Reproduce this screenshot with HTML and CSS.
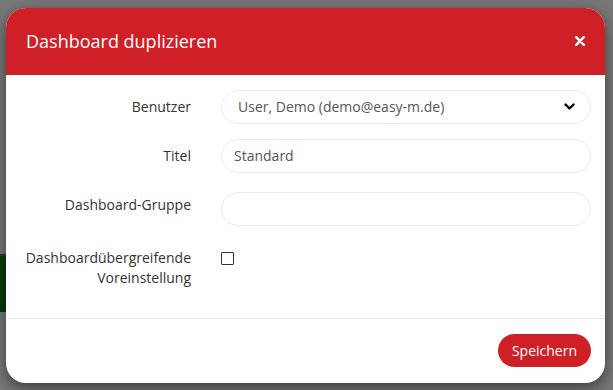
FILE: index.html
```html
<!DOCTYPE html>
<html lang="de">
<head>
<meta charset="utf-8">
<title>Dashboard duplizieren</title>
<link rel="stylesheet" href="styles.css">
</head>
<body>
<div class="backdrop-strip"></div>
<div class="modal">
  <div class="modal-header">
    <h4 class="modal-title">Dashboard duplizieren</h4>
    <span class="close" aria-label="Schließen">
      <svg width="10" height="10" viewBox="0 0 10 10"><path d="M1.2 1.2 L8.8 8.8 M8.8 1.2 L1.2 8.8" stroke="#fff" stroke-width="2.4" stroke-linecap="round"/></svg>
    </span>
  </div>
  <div class="modal-body">
    <div class="form-row">
      <label class="form-label">Benutzer</label>
      <div class="field select">
        <span class="select-text">User, Demo (demo@easy-m.de)</span>
        <svg class="chevron" width="11" height="8" viewBox="0 0 11 8"><path d="M1.5 1.5 L5.5 5.5 L9.5 1.5" fill="none" stroke="#000" stroke-width="2.4" stroke-linecap="round" stroke-linejoin="round"/></svg>
      </div>
    </div>
    <div class="form-row">
      <label class="form-label">Titel</label>
      <div class="field input">Standard</div>
    </div>
    <div class="form-row">
      <label class="form-label">Dashboard-Gruppe</label>
      <div class="field input offset"></div>
    </div>
    <div class="form-row">
      <label class="form-label">Dashboardübergreifende<br>Voreinstellung</label>
      <div class="check-wrap"><span class="checkbox"></span></div>
    </div>
  </div>
  <div class="modal-footer">
    <button class="btn-primary">Speichern</button>
  </div>
</div>
</body>
</html>
```
FILE: styles.css
```css
html, body {
  margin: 0;
  padding: 0;
}
body {
  width: 613px;
  height: 390px;
  overflow: hidden;
  background: #787878;
  font-family: "Open Sans", "Noto Sans", sans-serif;
  font-size: 14px;
  color: #333;
  position: relative;
  padding-top: 8px;
  padding-left: 6px;
  box-sizing: border-box;
}
.backdrop-strip {
  position: absolute;
  left: 0;
  top: 254px;
  width: 12px;
  height: 56px;
  background: #0b3c0b;
  border-top: 2px solid #5a2a20;
}
.modal {
  position: relative;
  width: 599px;
  height: 375px;
  background: #fff;
  border-radius: 20px;
  overflow: hidden;
  box-shadow: 0 5px 15px rgba(0,0,0,0.5);
  display: flex;
  flex-direction: column;
}
.modal-header {
  height: 67px;
  background: #cf2028;
  display: flex;
  align-items: center;
  justify-content: space-between;
  padding: 0 20px 0 20px;
  box-sizing: border-box;
}
.modal-title {
  margin: 0;
  font-size: 18px;
  font-weight: 400;
  color: #fff;
  line-height: 24px;
  padding-bottom: 1px;
}
.close {
  display: flex;
  width: 10px;
  height: 10px;
  margin-bottom: 1px;
}
.modal-body {
  padding: 15px 14px 0 0;
  border-bottom: 1px solid #e5e5e5;
}
.form-row {
  display: flex;
  align-items: flex-start;
  margin-bottom: 15px;
}
.form-label {
  width: 185px;
  flex: none;
  text-align: right;
  padding-top: 7px;
  line-height: 20px;
  margin-right: 30px;
  color: #333;
}
.field {
  width: 370px;
  height: 34px;
  box-sizing: border-box;
  border: 1px solid #ebebeb;
  border-radius: 17px;
  display: flex;
  align-items: center;
  color: #555;
  line-height: 20px;
}
.field.select {
  padding: 0 15px 0 16px;
  justify-content: space-between;
}
.field.input {
  padding: 0 12px;
}
.field.offset {
  margin-top: 4px;
}
.chevron {
  display: block;
}
.check-wrap {
  padding-top: 11px;
  height: 36px;
}
.checkbox {
  display: block;
  width: 13px;
  height: 13px;
  box-sizing: border-box;
  border: 1px solid #333;
  border-radius: 1px;
}
.modal-body .form-row:last-child {
  margin-bottom: 30px;
}
.modal-footer {
  display: flex;
  justify-content: flex-end;
  padding: 15px 14px 16px 0;
}
.btn-primary {
  height: 33px;
  padding: 0 14px;
  border: none;
  border-radius: 17px;
  background: #cf2028;
  color: #fff;
  font-family: "Open Sans", "Noto Sans", sans-serif;
  font-size: 14px;
  line-height: 20px;
}
```
